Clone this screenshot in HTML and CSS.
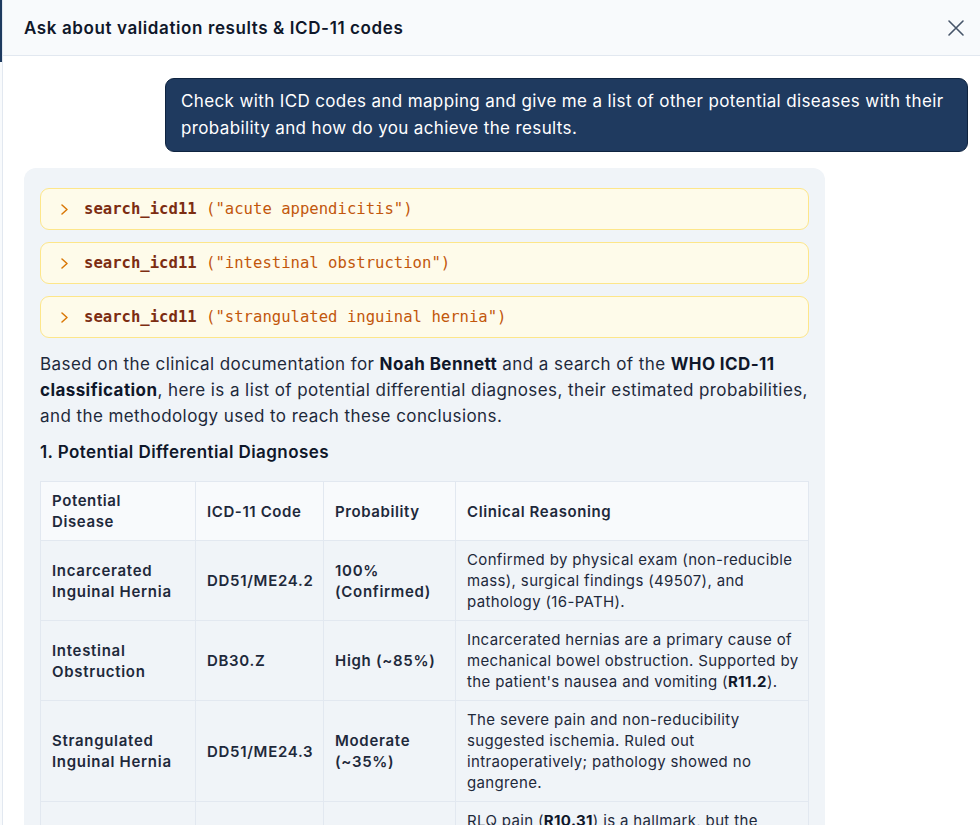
FILE: index.html
```html
<!DOCTYPE html>
<html lang="en">
<head>
    <meta charset="UTF-8">
    <meta name="viewport" content="width=device-width, initial-scale=1.0">
    <title>Ask about validation results</title>
    <link rel="stylesheet" href="styles.css">
</head>
<body>
    <div class="backdrop">
        <div class="backdrop-top"></div>
    </div>

    <div class="panel">
        <div class="panel-header">
            <h2>Ask about validation results &amp; ICD-11 codes</h2>
            <button class="close-btn" aria-label="Close">
                <svg width="18" height="18" viewBox="0 0 18 18" fill="none" stroke="#475569" stroke-width="1.6" stroke-linecap="round">
                    <path d="M2 2 L16 16 M16 2 L2 16"/>
                </svg>
            </button>
        </div>

        <div class="messages">
            <div class="msg-user">
                Check with ICD codes and mapping and give me a list of other potential diseases with their probability and how do you achieve the results.
            </div>

            <div class="msg-bot">
                <div class="tool-call"><svg class="chev" width="7" height="11" viewBox="0 0 7 11" fill="none" stroke="#d97706" stroke-width="1.5" stroke-linecap="round" stroke-linejoin="round"><path d="M1 1 L6 5.5 L1 10"/></svg><b>search_icd11</b> ("acute appendicitis")</div>
                <div class="tool-call"><svg class="chev" width="7" height="11" viewBox="0 0 7 11" fill="none" stroke="#d97706" stroke-width="1.5" stroke-linecap="round" stroke-linejoin="round"><path d="M1 1 L6 5.5 L1 10"/></svg><b>search_icd11</b> ("intestinal obstruction")</div>
                <div class="tool-call"><svg class="chev" width="7" height="11" viewBox="0 0 7 11" fill="none" stroke="#d97706" stroke-width="1.5" stroke-linecap="round" stroke-linejoin="round"><path d="M1 1 L6 5.5 L1 10"/></svg><b>search_icd11</b> ("strangulated inguinal hernia")</div>

                <p>Based on the clinical documentation for <strong>Noah Bennett</strong> and a search of the <strong>WHO ICD-11 classification</strong>, here is a list of potential differential diagnoses, their estimated probabilities, and the methodology used to reach these conclusions.</p>

                <h3>1. Potential Differential Diagnoses</h3>

                <table>
                    <thead>
                        <tr>
                            <th class="c1">Potential Disease</th>
                            <th class="c2">ICD-11 Code</th>
                            <th class="c3">Probability</th>
                            <th class="c4">Clinical Reasoning</th>
                        </tr>
                    </thead>
                    <tbody>
                        <tr>
                            <td><b>Incarcerated Inguinal Hernia</b></td>
                            <td><b>DD51/ME24.2</b></td>
                            <td><b>100% (Confirmed)</b></td>
                            <td>Confirmed by physical exam (non-reducible mass), surgical findings (49507), and pathology (16-PATH).</td>
                        </tr>
                        <tr>
                            <td><b>Intestinal Obstruction</b></td>
                            <td><b>DB30.Z</b></td>
                            <td><b>High (~85%)</b></td>
                            <td>Incarcerated hernias are a primary cause of mechanical bowel obstruction. Supported by the patient's nausea and vomiting (<strong>R11.2</strong>).</td>
                        </tr>
                        <tr>
                            <td><b>Strangulated Inguinal Hernia</b></td>
                            <td><b>DD51/ME24.3</b></td>
                            <td><b>Moderate (~35%)</b></td>
                            <td>The severe pain and non-reducibility suggested ischemia. Ruled out intraoperatively; pathology showed no gangrene.</td>
                        </tr>
                        <tr>
                            <td><b>Acute Appendicitis</b></td>
                            <td><b>DB10.0</b></td>
                            <td><b>Low (~5%)</b></td>
                            <td>RLQ pain (<strong>R10.31</strong>) is a hallmark, but the hernia findings and imaging explain the symptoms.</td>
                        </tr>
                    </tbody>
                </table>
            </div>
        </div>
    </div>
</body>
</html>
```

FILE: styles.css
```css
html, body {
    margin: 0;
    height: 100%;
    overflow: hidden;
}

body {
    display: flex;
    font-family: Inter, "Noto Sans", sans-serif;
    color: #1e293b;
    background-color: #fff;
}

.backdrop {
    width: 2px;
    flex-shrink: 0;
    background-color: #f8fafc;
    border-right: 1px solid #e2e8f0;
}

.backdrop-top {
    height: 62px;
    background-color: #1e3a5f;
}

.panel {
    flex: 1;
    display: flex;
    flex-direction: column;
    min-width: 0;
}

.panel-header {
    flex-shrink: 0;
    height: 56px;
    box-sizing: border-box;
    display: flex;
    align-items: center;
    justify-content: space-between;
    padding: 0 11px 0 21px;
    background-color: #f8fafc;
    border-bottom: 1px solid #e2e8f0;
}

.panel-header h2 {
    margin: 0;
    font-size: 17px;
    font-weight: 600;
    letter-spacing: 0.6px;
    color: #0f172a;
}

.close-btn {
    background: none;
    border: none;
    padding: 4px;
    display: flex;
    cursor: pointer;
}

.messages {
    flex-shrink: 0;
    display: flex;
    flex-direction: column;
    gap: 16px;
    padding: 22px 12px 0 21px;
}

.msg-user {
    align-self: flex-end;
    max-width: 770px;
    background-color: #1f3a5f;
    color: #fff;
    font-size: 17px;
    line-height: 27px;
    letter-spacing: 0.37px;
    padding: 9px 16px 9px 15px;
    border-radius: 9px;
    border: 1px solid #0f2440;
}

.msg-bot {
    width: 801px;
    box-sizing: border-box;
    background-color: #f0f4f8;
    border-radius: 12px;
    padding: 20px 12px 20px 16px;
    font-size: 17px;
    line-height: 26px;
    letter-spacing: 0.42px;
}

.tool-call {
    display: flex;
    align-items: center;
    width: 769px;
    box-sizing: border-box;
    background-color: #fefbea;
    border: 1px solid #fde68a;
    border-radius: 9px;
    padding: 10px 19px 10px 20px;
    margin-bottom: 12px;
    font-family: "DejaVu Sans Mono", monospace;
    font-size: 15.6px;
    line-height: 20px;
    letter-spacing: 0;
    color: #c2570c;
    white-space: pre;
}

.tool-call b {
    color: #7c2d12;
}

.tool-call .chev {
    margin-right: 16px;
}

.tool-call:last-of-type {
    margin-bottom: 13px;
}

.msg-bot p {
    margin: 0;
}

.msg-bot strong {
    font-weight: 700;
    color: #0f172a;
}

.msg-bot h3 {
    margin: 10px 0 16px 0;
    font-size: 17px;
    font-weight: 600;
    line-height: 26px;
    color: #0f172a;
}

table {
    width: 769px;
    border-collapse: collapse;
    font-size: 15px;
    line-height: 21px;
    letter-spacing: 0.35px;
    table-layout: fixed;
}

th, td {
    border: 1px solid #e2e8f0;
    padding: 8px 11px;
    text-align: left;
    vertical-align: middle;
}

th:last-child, td:last-child {
    padding-right: 5px;
}

th {
    background-color: #f8fafc;
    font-weight: 600;
    letter-spacing: 0.6px;
    color: #1e293b;
}

td b {
    font-weight: 600;
    color: #1e293b;
    letter-spacing: 0.7px;
}

td strong {
    font-weight: 700;
}

.c1 { width: 132px; }
.c2 { width: 105px; }
.c3 { width: 109px; }
.c4 { width: auto; }
```
